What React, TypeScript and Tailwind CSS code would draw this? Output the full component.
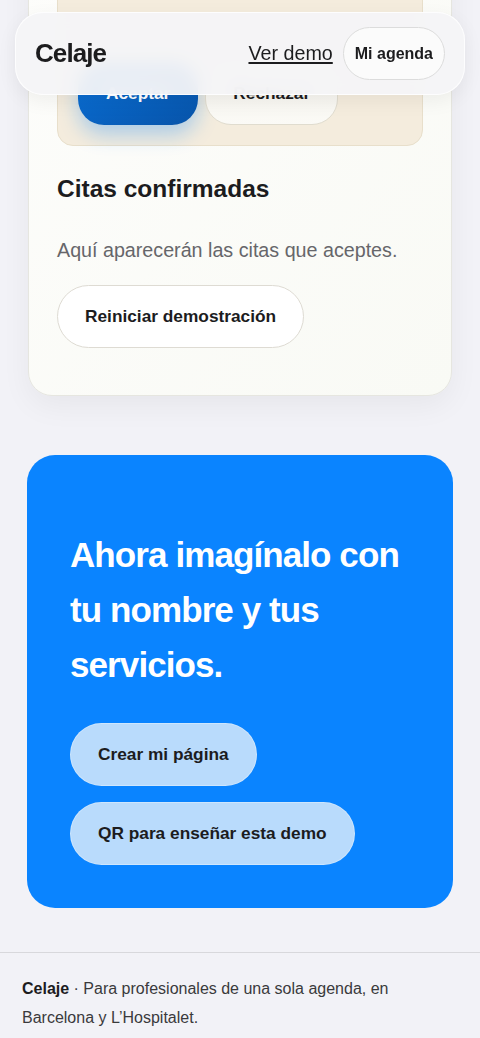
import React from "react";

export default function App() {
  return (
    <div className="relative h-[1038px] w-full overflow-hidden bg-[#f2f2f7] font-['Liberation_Sans',Arial,sans-serif] text-[#1c1c1e]">
      {/* Sticky header overlay */}
      <header className="absolute left-[15px] right-[15px] top-[12px] z-10 flex h-[83px] items-center justify-between rounded-[28px] border border-white/80 bg-[#f4f4f7]/95 pl-[19px] pr-[19px] shadow-[0_6px_20px_rgba(0,0,0,0.06)] backdrop-blur">
        <span className="text-[26px] font-bold tracking-[-0.035em] text-[#1c1c1e]">Celaje</span>
        <nav className="flex items-center gap-[10px]">
          <a className="text-[19.7px] leading-none text-[#1c1c1e] underline decoration-[1.5px] underline-offset-[2px]">Ver demo</a>
          <button className="h-[53px] rounded-full border border-[#dcdcdc] bg-[#fbfbfb] px-[11px] text-[16px] font-bold text-[#1c1c1e]">
            Mi agenda
          </button>
        </nav>
      </header>

      <main className="flex flex-col">
        {/* Demo card (scrolled partially out of view) */}
        <section className="mx-7 mt-[-52px] rounded-[24px] border border-[#e6e6e0] bg-gradient-to-br from-[#fdfdfb] to-[#f9faf5] px-[28px] pb-[47px] pt-[28px] shadow-[0_10px_30px_rgba(0,0,0,0.05)]">
          <div className="flex flex-col rounded-[16px] border border-[#e8dfcb] bg-[#f4ecdd] p-5">
            <div className="h-[64px]" />
            <div className="flex gap-[7px]">
              <button className="h-[63px] rounded-[26px] bg-gradient-to-br from-[#0b74de] to-[#0753a8] px-[28px] text-[17.3px] font-bold text-white shadow-[0_10px_20px_rgba(10,132,255,0.3)]">
                Aceptar
              </button>
              <button className="h-[63px] rounded-[26px] border border-[#e0dccf] bg-gradient-to-b from-[#f3f1ea] to-[#fbfaf6] px-[27px] text-[17.3px] font-bold text-[#1c1c1e]">
                Rechazar
              </button>
            </div>
          </div>

          <h2 className="mt-7 text-[24.5px] font-bold leading-[30px] text-[#1c1c1e]">Citas confirmadas</h2>
          <p className="mt-[31px] text-[19.7px] leading-[30px] text-[#66666a]">Aquí aparecerán las citas que aceptes.</p>
          <button className="mt-5 h-[63px] rounded-full border border-[#dedbd3] bg-white px-[27px] text-[17.3px] font-bold text-[#1c1c1e]">
            Reiniciar demostración
          </button>
        </section>

        {/* CTA */}
        <section className="mx-[27px] mt-[59px] rounded-[28px] bg-[#0a84ff] px-[43px] pb-[43px] pt-[72px]">
          <h2 className="text-[35px] font-bold leading-[55px] tracking-[-0.026em] text-white">
            Ahora imagínalo con tu nombre y tus servicios.
          </h2>
          <div className="mt-[31px] flex flex-col items-start gap-[16px]">
            <button className="h-[63px] rounded-full border border-white/30 bg-[#b9dbfc] px-[27px] text-[17.3px] font-bold text-[#1c1c1e]">
              Crear mi página
            </button>
            <button className="h-[63px] rounded-full border border-white/30 bg-[#b9dbfc] px-[27px] text-[17.3px] font-bold text-[#1c1c1e]">
              QR para enseñar esta demo
            </button>
          </div>
        </section>

        {/* Footer */}
        <footer className="mt-[44px] border-t border-[#d8d8dc] px-[22px] pt-[22px]">
          <p className="text-[16px] leading-[28.8px] text-[#3a3a3c]">
            <strong className="font-bold text-[#1c1c1e]">Celaje</strong> · Para profesionales de una sola agenda, en Barcelona y L’Hospitalet.
          </p>
        </footer>
      </main>
    </div>
  );
}
